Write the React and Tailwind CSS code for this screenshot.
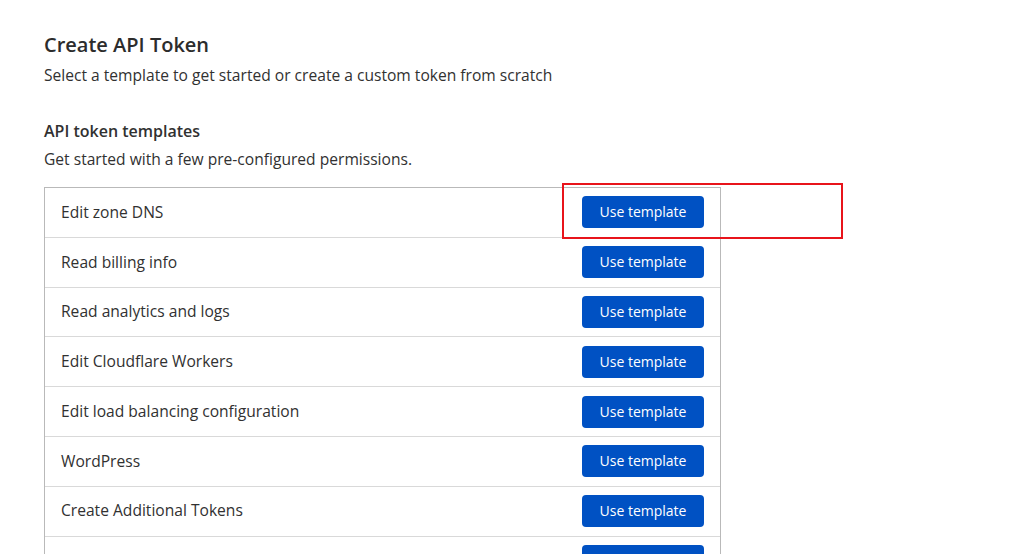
import React from "react";

const templates = [
  "Edit zone DNS",
  "Read billing info",
  "Read analytics and logs",
  "Edit Cloudflare Workers",
  "Edit load balancing configuration",
  "WordPress",
  "Create Additional Tokens",
  "Read all resources",
];

export default function App() {
  return (
    <div
      className="min-h-screen bg-white px-[44px] pt-[31px] text-[#313131]"
      style={{ fontFamily: '"Open Sans", "Noto Sans", sans-serif' }}
    >
      <h1 className="text-xl leading-7 font-semibold text-[#2c2c2c]">Create API Token</h1>
      <p className="mt-1 text-[15.6px] leading-6">
        Select a template to get started or create a custom token from scratch
      </p>

      <h2 className="mt-8 text-base leading-6 font-semibold">API token templates</h2>
      <p className="mt-1 text-[15.6px] leading-6">Get started with a few pre-configured permissions.</p>

      {/* Templates table */}
      <div className="relative mt-4 w-[677px] border border-[#b9b9b9]">
        {templates.map((name, i) => (
          <div
            key={name}
            className={`flex h-[48.8px] items-center justify-between pl-4 pr-4 ${
              i < templates.length - 1 ? "border-b border-[#d9d9d9]" : ""
            }`}
            style={{ boxSizing: "content-box" }}
          >
            <span className="text-[15.6px]">{name}</span>
            <button className="h-8 w-[122px] rounded-[4px] bg-[#0051c3] text-sm text-white">
              Use template
            </button>
          </div>
        ))}

        {/* Highlight box */}
        <div className="pointer-events-none absolute left-[517px] top-[-5px] h-[56px] w-[281px] border-2 border-[#e8141b]" />
      </div>
    </div>
  );
}
